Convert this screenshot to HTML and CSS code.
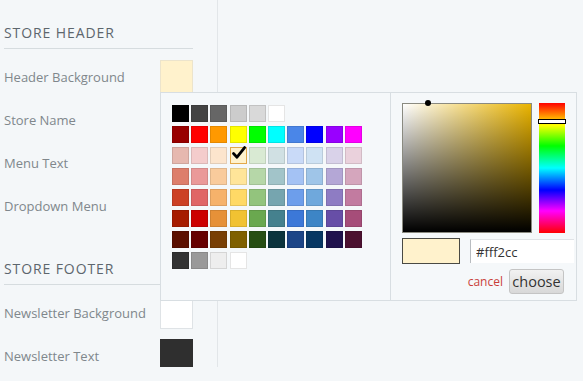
FILE: index.html
```html
<!DOCTYPE html>
<html lang="en">
<head>
  <meta charset="UTF-8">
  <meta name="viewport" content="width=device-width, initial-scale=1.0">
  <title>Store Colors</title>
  <link rel="stylesheet" href="styles.css">
</head>
<body>
  <div class="page">
    <aside class="settings">
      <section class="group">
        <h3>Store Header</h3>
        <div class="row"><span>Header Background</span><span class="swatch cream"></span></div>
        <div class="row"><span>Store Name</span><span class="swatch"></span></div>
        <div class="row"><span>Menu Text</span><span class="swatch"></span></div>
        <div class="row"><span>Dropdown Menu</span><span class="swatch"></span></div>
      </section>
      <section class="group footer">
        <h3>Store Footer</h3>
        <div class="row"><span>Newsletter Background</span><span class="swatch white"></span></div>
        <div class="row"><span>Newsletter Text</span><span class="swatch dark"></span></div>
      </section>
    </aside>
    <main class="preview"></main>

    <!-- color picker popover -->
    <div class="picker">
      <div class="palette">
        <div class="prow">
          <span class="cell" style="background:#000000"></span>
          <span class="cell" style="background:#434343"></span>
          <span class="cell" style="background:#666666"></span>
          <span class="cell" style="background:#cccccc"></span>
          <span class="cell" style="background:#d9d9d9"></span>
          <span class="cell" style="background:#ffffff"></span>
        </div>
        <div class="prow">
          <span class="cell" style="background:#980000"></span>
          <span class="cell" style="background:#ff0000"></span>
          <span class="cell" style="background:#ff9900"></span>
          <span class="cell" style="background:#ffff00"></span>
          <span class="cell" style="background:#00ff00"></span>
          <span class="cell" style="background:#00ffff"></span>
          <span class="cell" style="background:#4a86e8"></span>
          <span class="cell" style="background:#0000ff"></span>
          <span class="cell" style="background:#9900ff"></span>
          <span class="cell" style="background:#ff00ff"></span>
        </div>
        <div class="prow">
          <span class="cell" style="background:#e6b8af"></span>
          <span class="cell" style="background:#f4cccc"></span>
          <span class="cell" style="background:#fce5cd"></span>
          <span class="cell selected" style="background:#fff2cc">
            <svg viewBox="0 0 16 16" width="16" height="16"><path d="M2.5 8.6 L6 12.2 L13.6 2.6" fill="none" stroke="#000" stroke-width="2.8" stroke-linecap="round" stroke-linejoin="round"/></svg>
          </span>
          <span class="cell" style="background:#d9ead3"></span>
          <span class="cell" style="background:#d0e0e3"></span>
          <span class="cell" style="background:#c9daf8"></span>
          <span class="cell" style="background:#cfe2f3"></span>
          <span class="cell" style="background:#d9d2e9"></span>
          <span class="cell" style="background:#ead1dc"></span>
        </div>
        <div class="prow">
          <span class="cell" style="background:#dd7e6b"></span>
          <span class="cell" style="background:#ea9999"></span>
          <span class="cell" style="background:#f9cb9c"></span>
          <span class="cell" style="background:#ffe599"></span>
          <span class="cell" style="background:#b6d7a8"></span>
          <span class="cell" style="background:#a2c4c9"></span>
          <span class="cell" style="background:#a4c2f4"></span>
          <span class="cell" style="background:#9fc5e8"></span>
          <span class="cell" style="background:#b4a7d6"></span>
          <span class="cell" style="background:#d5a6bd"></span>
        </div>
        <div class="prow">
          <span class="cell" style="background:#cc4125"></span>
          <span class="cell" style="background:#e06666"></span>
          <span class="cell" style="background:#f6b26b"></span>
          <span class="cell" style="background:#ffd966"></span>
          <span class="cell" style="background:#93c47d"></span>
          <span class="cell" style="background:#76a5af"></span>
          <span class="cell" style="background:#6d9eeb"></span>
          <span class="cell" style="background:#6fa8dc"></span>
          <span class="cell" style="background:#8e7cc3"></span>
          <span class="cell" style="background:#c27ba0"></span>
        </div>
        <div class="prow">
          <span class="cell" style="background:#a61c00"></span>
          <span class="cell" style="background:#cc0000"></span>
          <span class="cell" style="background:#e69138"></span>
          <span class="cell" style="background:#f1c232"></span>
          <span class="cell" style="background:#6aa84f"></span>
          <span class="cell" style="background:#45818e"></span>
          <span class="cell" style="background:#3c78d8"></span>
          <span class="cell" style="background:#3d85c6"></span>
          <span class="cell" style="background:#674ea7"></span>
          <span class="cell" style="background:#a64d79"></span>
        </div>
        <div class="prow">
          <span class="cell" style="background:#5b0f00"></span>
          <span class="cell" style="background:#660000"></span>
          <span class="cell" style="background:#783f04"></span>
          <span class="cell" style="background:#7f6000"></span>
          <span class="cell" style="background:#274e13"></span>
          <span class="cell" style="background:#0c343d"></span>
          <span class="cell" style="background:#1c4587"></span>
          <span class="cell" style="background:#073763"></span>
          <span class="cell" style="background:#20124d"></span>
          <span class="cell" style="background:#4c1130"></span>
        </div>
        <div class="prow">
          <span class="cell" style="background:#333333"></span>
          <span class="cell" style="background:#999999"></span>
          <span class="cell" style="background:#eeeeee"></span>
          <span class="cell" style="background:#ffffff"></span>
        </div>
      </div>

      <div class="chooser">
        <div class="pick-area">
          <div class="sat-val"><span class="dragger"></span></div>
          <div class="hue"><span class="hue-marker"></span></div>
        </div>
        <div class="value-row">
          <span class="current"></span>
          <input class="hex" type="text" value="#fff2cc">
        </div>
        <div class="buttons">
          <a class="cancel" href="#">cancel</a>
          <button class="choose">choose</button>
        </div>
      </div>
    </div>
  </div>
</body>
</html>
```

FILE: styles.css
```css
body {
  margin: 0;
  padding: 0;
  background-color: #f4f7f9;
  font-family: "Open Sans", "Liberation Sans", sans-serif;
}

.page {
  position: relative;
  display: flex;
  height: 367px;
  overflow: hidden;
}

.settings {
  width: 189px;
  padding: 23px 0 0 4px;
  flex-shrink: 0;
}

.group h3 {
  margin: 0 0 11px;
  padding-bottom: 5px;
  border-bottom: 1px solid #d6dcdf;
  font-size: 14px;
  font-weight: normal;
  line-height: 20px;
  letter-spacing: 0.9px;
  text-transform: uppercase;
  color: #5d666d;
}

.group.footer {
  margin-top: 37px;
}

.row {
  display: flex;
  justify-content: space-between;
  align-items: center;
  height: 33px;
  margin-bottom: 10px;
  font-size: 13px;
  color: #80878c;
}

.swatch {
  width: 33px;
  height: 33px;
  box-sizing: border-box;
  border: 1px solid #dfe3e6;
  background: #fff;
}

.swatch.cream {
  background: #fff2cc;
  border-color: #ece4cc;
}

.swatch.dark {
  background: #2f2f2f;
  border-color: #2f2f2f;
}

.preview {
  flex: 1;
  margin-left: 24px;
  border-left: 1px solid #e2e6e9;
}

/* picker popover */
.picker {
  position: absolute;
  left: 160px;
  top: 92px;
  display: flex;
  height: 209px;
  background: #f5f8fa;
}

.palette {
  width: 218px;
  padding: 12px 0 0 11px;
  border-top: 1px solid #d8dee2;
  border-left: 1px solid #d8dee2;
  border-bottom: 1px solid #d8dee2;
}

.prow {
  display: flex;
  gap: 2.2px;
  margin-bottom: 4px;
}

.cell {
  position: relative;
  width: 17px;
  height: 17px;
  box-sizing: border-box;
  border: 1px solid rgba(0, 0, 0, 0.1);
}

.cell.selected {
  border-color: #e2a84a;
}

.cell.selected svg {
  position: absolute;
  left: 0;
  top: -3px;
}

.chooser {
  width: 174px;
  padding: 10px 0 0 11px;
  border: 1px solid #d8dee2;
}

.pick-area {
  display: flex;
  gap: 7px;
}

.sat-val {
  position: relative;
  width: 130px;
  height: 130px;
  box-sizing: border-box;
  border: 1px solid #8a8a80;
  background:
    linear-gradient(to top, #000, rgba(0, 0, 0, 0)),
    linear-gradient(to right, #fff, rgba(255, 255, 255, 0)),
    #eab400;
}

.dragger {
  position: absolute;
  left: 22px;
  top: -4px;
  width: 6px;
  height: 6px;
  border-radius: 50%;
  background: #000;
}

.hue {
  position: relative;
  width: 26px;
  height: 130px;
  background: linear-gradient(to bottom, #ff0000 0%, #ffff00 17%, #00ff00 33%, #00ffff 50%, #0000ff 67%, #ff00ff 83%, #ff0000 100%);
}

.hue-marker {
  position: absolute;
  left: -1px;
  right: -1px;
  top: 16px;
  height: 3px;
  background: #fff;
  border: 1px solid #000;
}

.value-row {
  display: flex;
  align-items: center;
  gap: 10px;
  margin-top: 5px;
}

.current {
  width: 58px;
  height: 26px;
  box-sizing: border-box;
  border: 1px solid #4a4a44;
  background: #fff2cc;
}

.hex {
  width: 104px;
  height: 24px;
  box-sizing: border-box;
  padding: 0 5px;
  border: none;
  border-left: 1px solid #b8bcc0;
  border-top: 1px solid #e0e3e6;
  background: #fff;
  font-family: "Open Sans", "Liberation Sans", sans-serif;
  font-size: 13px;
  color: #333;
}

.buttons {
  display: flex;
  justify-content: flex-end;
  align-items: center;
  gap: 6px;
  margin-top: 5px;
  padding-right: 12px;
}

.cancel {
  font-size: 12px;
  color: #c9403a;
  text-decoration: none;
}

.choose {
  width: 55px;
  height: 25px;
  padding: 0;
  border: 1px solid #c4c4c4;
  border-radius: 3px;
  background: linear-gradient(to bottom, #f2f2f2, #d8d8d8);
  font-family: "Open Sans", "Liberation Sans", sans-serif;
  font-size: 14.5px;
  color: #333;
}
```
